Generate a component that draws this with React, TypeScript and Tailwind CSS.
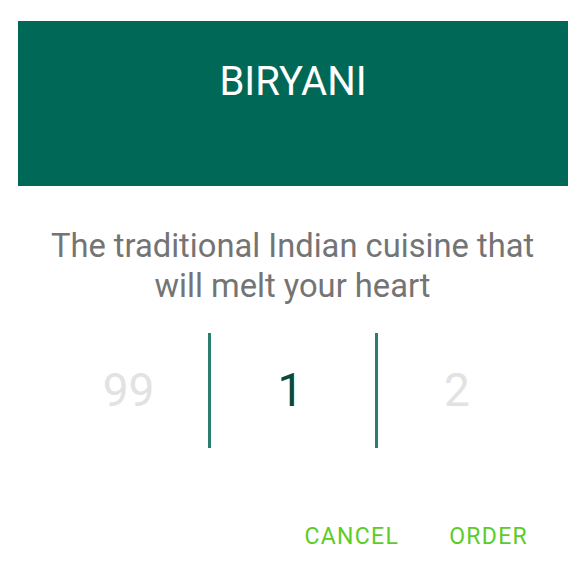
export default function App() {
  return (
    <div
      className="w-[585px] h-[579px] bg-white overflow-hidden"
      style={{ fontFamily: 'Roboto, "Noto Sans", sans-serif' }}
    >
      <div className="ml-[18px] mt-[21px] w-[550px] h-[165px] bg-[#006857] flex justify-center">
        <h1 className="mt-[35px] text-[40px] leading-[52px] text-white font-normal">BIRYANI</h1>
      </div>
      <p className="mt-[40px] px-[40px] text-center text-[32.7px] leading-[40px] text-[#747474]">
        The traditional Indian cuisine that will melt your heart
      </p>
      <div className="mt-[27px] flex justify-center">
        <div className="w-[167px] h-[115px] pl-[9px] flex items-center justify-center text-[46px] text-[#e2e2e2]">
          99
        </div>
        <div className="w-[3px] h-[115px] bg-[#2b7d6d]" />
        <div className="w-[164px] h-[115px] pr-[4px] flex items-center justify-center text-[46px] text-[#0b4a3b]">
          1
        </div>
        <div className="w-[3px] h-[115px] bg-[#2b7d6d]" />
        <div className="w-[167px] h-[115px] pr-[8px] flex items-center justify-center text-[46px] text-[#e2e2e2]">
          2
        </div>
      </div>
      <div className="mt-[74px] flex justify-end pr-[57px] gap-[50px] text-[23px] leading-[30px] tracking-[1.3px] text-[#5ccc27]">
        <button>CANCEL</button>
        <button>ORDER</button>
      </div>
    </div>
  )
}
